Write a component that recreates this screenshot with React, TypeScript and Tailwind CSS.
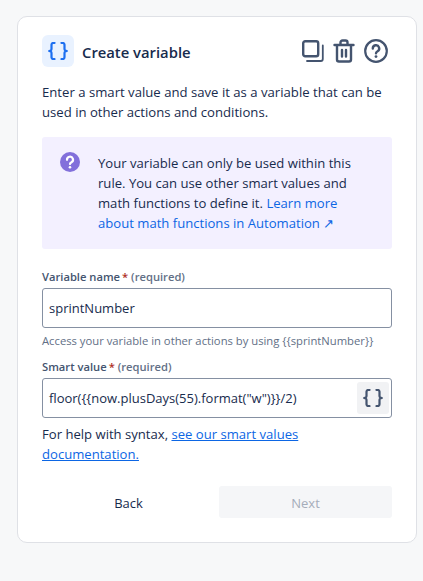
function Braces({ className }: { className: string }) {
  return (
    <svg viewBox="0 0 20 18" fill="none" stroke="currentColor" strokeWidth="2.2" strokeLinecap="round" strokeLinejoin="round" className={className}>
      <path d="M6.5 1H5.2a1.7 1.7 0 0 0-1.7 1.7V7A2 2 0 0 1 1.2 9a2 2 0 0 1 2.3 2v4.3A1.7 1.7 0 0 0 5.2 17h1.3" />
      <path d="M13.5 1h1.3a1.7 1.7 0 0 1 1.7 1.7V7a2 2 0 0 0 2.3 2 2 2 0 0 0-2.3 2v4.3a1.7 1.7 0 0 1-1.7 1.7h-1.3" />
    </svg>
  );
}

export default function App() {
  return (
    <div className="min-h-[581px] bg-[#f7f8f9] pt-4 pl-[17px] pr-[6px] text-[#172b4d] font-['Open_Sans','Noto_Sans',sans-serif]">
      <div className="w-[400px] h-[527px] bg-white rounded-[10px] border border-[#dfe1e6] px-6 pt-[18px]">
        <div className="flex items-center h-8">
          <div className="w-8 h-8 rounded-md bg-[#e9f2ff] flex items-center justify-center text-[#1d6ff0]">
            <Braces className="w-5 h-[18px]" />
          </div>
          <h1 className="ml-2 mt-[2px] text-[14.8px] font-semibold leading-none">Create variable</h1>
          <div className="ml-auto mr-1 flex items-center gap-[9px] text-[#44546f]">
            <svg viewBox="0 0 22 22" className="w-[22px] h-[22px]" fill="none" stroke="currentColor" strokeLinejoin="round" strokeLinecap="round">
              <rect x="1.2" y="1.2" width="15" height="15" rx="2" strokeWidth="2.4" />
              <path d="M20.8 5.5V19a2 2 0 0 1-2 2H5" strokeWidth="1.8" />
            </svg>
            <svg viewBox="0 0 22 24" className="w-[22px] h-6" fill="none" stroke="currentColor" strokeWidth="2.4" strokeLinejoin="round" strokeLinecap="round">
              <path d="M1.5 6h19M7.5 5.5V3.5a2 2 0 0 1 2-2h3a2 2 0 0 1 2 2v2" />
              <path d="M4 6.5V20.5a2 2 0 0 0 2 2h10a2 2 0 0 0 2-2V6.5" />
              <path d="M9 11v6.5M13 11v6.5" />
            </svg>
            <svg viewBox="0 0 24 24" className="w-6 h-6" fill="none" stroke="currentColor" strokeWidth="2.2" strokeLinecap="round" strokeLinejoin="round">
              <circle cx="12" cy="12" r="10.8" />
              <path d="M8.8 9.5a3.2 3.2 0 1 1 4.8 2.7c-1 .6-1.6 1-1.6 2" strokeWidth="2.4" />
              <circle cx="12" cy="17.6" r="1.4" fill="currentColor" stroke="none" />
            </svg>
          </div>
        </div>

        <p className="mt-[15px] text-[13.15px] leading-5">
          Enter a smart value and save it as a variable that can be used in other actions and conditions.
        </p>

        <div className="mt-[15px] h-28 bg-[#f3f0ff] rounded-[3px] flex pl-[18px] pt-4 pr-6">
          <svg viewBox="0 0 20 20" className="w-5 h-5 shrink-0 mt-[-1px]">
            <circle cx="10" cy="10" r="10" fill="#8270db" />
            <path d="M7 7.8a3 3 0 1 1 4.5 2.5c-1 .6-1.5 1-1.5 1.8" fill="none" stroke="#fff" strokeWidth="2.2" strokeLinecap="round" />
            <circle cx="10" cy="15.2" r="1.3" fill="#fff" />
          </svg>
          <p className="ml-[18px] text-[13.1px] leading-5">
            Your variable can only be used within this rule. You can use other smart values and math functions to define it.{" "}
            <a className="text-[#0c66e4]">Learn more about math functions in Automation ↗</a>
          </p>
        </div>

        <div className="mt-5">
          <label className="block text-[11.2px] leading-4 font-semibold text-[#44546f]">
            Variable name<span className="ml-[2px] text-[#ae2e24]">*</span> <span className="text-[#626f86]">(required)</span>
          </label>
          <div className="mt-[3px] h-10 border border-[#8590a2] rounded-[3px] flex items-center px-[6px] pt-[2px] text-[13px]">sprintNumber</div>
          <p className="mt-[5px] text-[11.25px] leading-4 text-[#626f86]">Access your variable in other actions by using {"{{sprintNumber}}"}</p>
        </div>

        <div className="mt-[10px]">
          <label className="block text-[11.2px] leading-4 font-semibold text-[#44546f]">
            Smart value<span className="ml-[2px] text-[#ae2e24]">*</span> <span className="text-[#626f86]">(required)</span>
          </label>
          <div className="mt-[3px] h-10 border border-[#8590a2] rounded-[3px] flex items-center justify-between pl-[6px] pr-[2px] text-[13px]">
            <span className="mt-[2px]">floor({'{{now.plusDays(55).format("w")}}'}/2)</span>
            <span className="w-8 h-8 rounded-[3px] bg-[#f1f2f4] flex items-center justify-center text-[#44546f]">
              <Braces className="w-5 h-[18px]" />
            </span>
          </div>
        </div>

        <p className="mt-[6px] text-[13.1px] leading-5">
          For help with syntax, <a className="text-[#0c66e4] underline">see our smart values documentation.</a>
        </p>

        <div className="mt-[22px] flex gap-1">
          <button className="w-[173px] h-8 pt-1 text-[13px] text-[#172b4d] flex items-center justify-center">Back</button>
          <button className="w-[173px] h-8 pt-1 rounded-[3px] bg-[#f5f6f8] text-[13px] text-[#a5adba] flex items-center justify-center">Next</button>
        </div>
      </div>
    </div>
  );
}
